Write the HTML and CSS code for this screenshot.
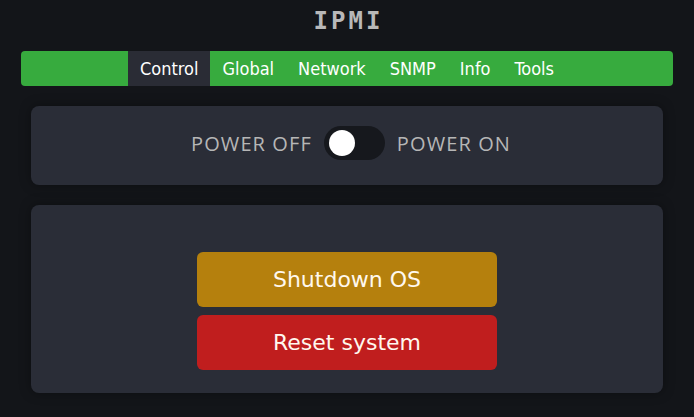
FILE: index.html
```html
<!DOCTYPE html>
<html>
<head>
<meta charset="utf-8">
<link rel="stylesheet" href="styles.css">
</head>
<body>
<div class="page">
  <h1 class="title">IPMI</h1>
  <nav class="nav">
    <a class="tab active">Control</a>
    <a class="tab">Global</a>
    <a class="tab">Network</a>
    <a class="tab">SNMP</a>
    <a class="tab">Info</a>
    <a class="tab">Tools</a>
  </nav>
  <section class="card power">
    <span class="label">POWER OFF</span>
    <span class="switch"><span class="knob"></span></span>
    <span class="label">POWER ON</span>
  </section>
  <section class="card actions">
    <button class="btn btn-warn">Shutdown OS</button>
    <button class="btn btn-danger">Reset system</button>
  </section>
</div>
</body>
</html>
```
FILE: styles.css
```css
html, body {
  margin: 0;
  padding: 0;
  background: #131519;
  height: 100%;
}
.page {
  padding: 0 21px;
  font-family: "DejaVu Sans Condensed", "DejaVu Sans", sans-serif;
}
.title {
  margin: 0;
  height: 51px;
  box-sizing: border-box;
  padding-top: 8px;
  text-align: center;
  font-family: "DejaVu Sans Mono", monospace;
  font-weight: bold;
  font-size: 24px;
  line-height: 26px;
  letter-spacing: 3px;
  text-indent: 3px;
  color: #b8b8b8;
}
.nav {
  display: flex;
  justify-content: center;
  height: 35px;
  background: #37ab3e;
  border-radius: 4px;
}
.tab {
  display: flex;
  align-items: center;
  padding: 0 12px;
  font-size: 18px;
  color: #ffffff;
}
.tab.active {
  background: #2a2c35;
}
.card {
  margin: 20px 10px 0;
  background: #2a2d37;
  border-radius: 8px;
  box-shadow: 0 0 12px rgba(0, 0, 0, 0.35);
}
.power {
  height: 79px;
  box-sizing: border-box;
  display: flex;
  align-items: center;
  justify-content: center;
  gap: 12px;
  padding-left: 8px;
  padding-bottom: 5px;
}
.label {
  font-family: "Open Sans", sans-serif;
  font-size: 20px;
  letter-spacing: 1.1px;
  color: #b6b6b6;
}
.switch {
  width: 61px;
  height: 34px;
  border-radius: 17px;
  background: #16181d;
  display: flex;
  align-items: center;
  padding-left: 5px;
  box-sizing: border-box;
}
.knob {
  width: 26px;
  height: 26px;
  border-radius: 50%;
  background: #ffffff;
}
.actions {
  height: 188px;
  box-sizing: border-box;
  padding-top: 47px;
  display: flex;
  flex-direction: column;
  align-items: center;
  gap: 8px;
}
.btn {
  width: 300px;
  height: 55px;
  border: none;
  border-radius: 6px;
  font-family: "DejaVu Sans", sans-serif;
  font-size: 22px;
  color: #fff8ee;
  padding: 0;
}
.btn-warn {
  background: #b5800d;
}
.btn-danger {
  background: #c01e1e;
}
```
